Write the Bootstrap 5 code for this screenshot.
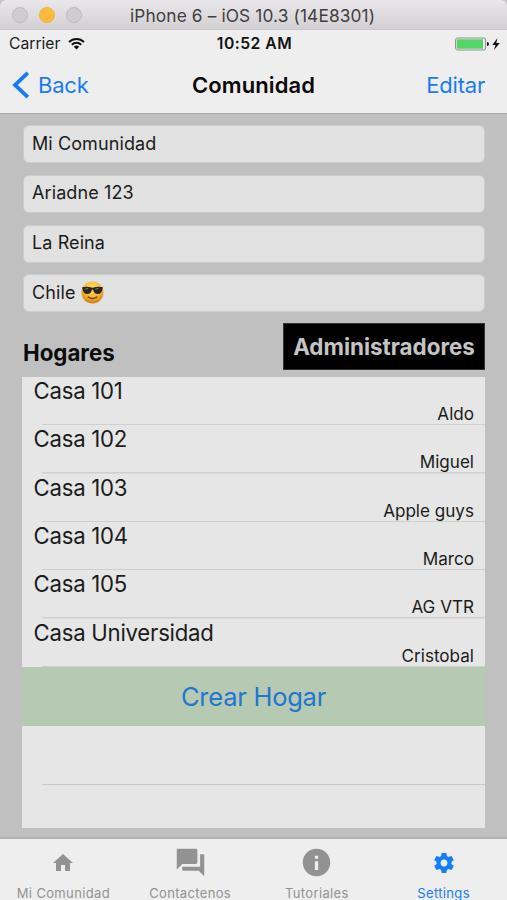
<!DOCTYPE html>
<html lang="es">
<head>
<meta charset="utf-8">
<meta name="viewport" content="width=device-width, initial-scale=1">
<title>Comunidad</title>
<link href="https://cdn.jsdelivr.net/npm/bootstrap@5.3.0/dist/css/bootstrap.min.css" rel="stylesheet">
<style>
  body { font-family: Inter, "Liberation Sans", sans-serif; background: #c0c0c0; color: #1b1b1b; height: 900px; overflow: hidden; line-height: 1; white-space: nowrap; }
  .window-bar { height: 30px; padding-left: 12px; background: linear-gradient(#e9e7e9, #d3d0d3); border-bottom: 1px solid #c9c7c9; border-radius: 6px 6px 0 0; }
  .light { width: 16px; height: 16px; border-radius: 50%; background: #cfcdcf; border: 1px solid #bdbbbd; }
  .light-min { background: #fdbc40; border-color: #eeb03c; }
  .window-title { color: #3f3f3f; font-size: 17.3px; padding-left: 48px; letter-spacing: .13px; padding-top: 3px; }
  .status-bar { height: 27px; background: #eee; font-size: 15.7px; padding: 0 7px 0 9px; }
  .status-bar > div { flex: 1 1 0; }
  .clock { font-weight: 600; color: #111; letter-spacing: .5px; }
  .title-bar { height: 57px; background: #eee; border-bottom: 1px solid #aaa; padding: 0 22px 0 12px; font-size: 22px; color: #1a7cf5; letter-spacing: -.2px; }
  .title-bar > div { flex: 1 1 0; }
  .page-title { font-weight: 600; color: #0a0a0a; letter-spacing: .1px; padding-left: 10px; }
  .main-area { height: 723px; padding: 11px 22px 0 22px; }
  .fields { gap: 11.8px; padding: 0 0 0 1px; }
  .field { height: 38px; background: #e1e1e1; border: 1px solid #cdcdcd; border-radius: 6px; padding: 0 8px 1px; font-size: 18px; letter-spacing: .1px; }
  .heading-row { height: 47px; margin-top: 11px; margin-bottom: 6.5px; }
  .section-name { font-size: 22.3px; font-weight: 700; color: #0c0c0c; padding: 12px 0 0 1px; }
  .admin-btn { width: 202px; background: #000; color: #c4c4c4; border: 1px solid #333; border-radius: 0; font-size: 22.4px; font-weight: 700; line-height: 1; padding: 0; }
  .home-table { height: 451.5px; background: #e6e6e6; }
  .home-row { height: 48.4px; padding: 2px 11px 0 11.5px; background: linear-gradient(#cfcfcf, #cfcfcf) 20px 100% / 100% 1.5px no-repeat; }
  .home-name { font-size: 22.2px; line-height: 24px; letter-spacing: -.25px; }
  .home-owner { font-size: 17.1px; line-height: 20px; margin-top: 1px; }
  .create-btn { height: 59px; background: #b6c9b2; color: #2275d0; font-size: 25.5px; letter-spacing: -.25px; border: 0; border-radius: 0; padding: 0; }
  .blank-row { height: 59px; background: linear-gradient(#c9c9c9, #c9c9c9) 20px 100% / 100% 1px no-repeat; }
  .tabs { height: 63px; background: #eee; border-top: 2px solid #b2b2b2; color: #929292; font-size: 13px; letter-spacing: .35px; }
  .tab-item { flex: 1 1 0; padding-top: 7px; }
  .tab-icon { height: 33px; margin-bottom: 8px; }
  .tab-current { color: #177efb; }
</style>
</head>
<body class="d-flex flex-column">
  <header>
    <div class="window-bar d-flex align-items-center">
      <div class="d-flex" style="gap:11px"><span class="light"></span><span class="light light-min"></span><span class="light"></span></div>
      <div class="window-title">iPhone 6 – iOS 10.3 (14E8301)</div>
    </div>
    <div class="status-bar d-flex align-items-center">
      <div class="d-flex align-items-center gap-2"><span>Carrier</span>
        <svg width="17" height="13" viewBox="0 0 17 13"><g fill="none" stroke="#111" stroke-width="2"><path d="M1 5a10.6 10.6 0 0 1 15 0"/><path d="M3.8 7.8a6.6 6.6 0 0 1 9.4 0"/></g><path d="M8.5 12.5 5.8 9.8a3.8 3.8 0 0 1 5.4 0z" fill="#111"/></svg>
      </div>
      <div class="clock text-center">10:52 AM</div>
      <div class="d-flex align-items-center justify-content-end">
        <svg width="45" height="14" viewBox="0 0 45 14"><rect x=".6" y="1" width="30" height="12" rx="2" fill="#eee" stroke="#8b8b8b"/><rect x="1.8" y="2.2" width="26.2" height="9.6" rx="1" fill="#53d769"/><path d="M32 5q2 0 2 2t-2 2z" fill="#111"/><path d="M42.500 1 37.300 8h3.200l-1.500 5L44.800 6h-3.500z" fill="#111"/></svg>
      </div>
    </div>
    <nav class="title-bar d-flex align-items-center">
      <div class="d-flex align-items-center"><svg width="18" height="28" viewBox="0 0 18 28" fill="none" stroke="currentColor" stroke-width="3.8"><path d="M15.8 1.8 3 14l12.800 12.200"/></svg><span class="ps-2">Back</span></div>
      <div class="page-title text-center">Comunidad</div>
      <div class="text-end">Editar</div>
    </nav>
  </header>
  <main class="main-area">
    <div class="fields d-flex flex-column">
      <div class="field d-flex align-items-center">Mi Comunidad</div>
      <div class="field d-flex align-items-center">Ariadne 123</div>
      <div class="field d-flex align-items-center">La Reina</div>
      <div class="field d-flex align-items-center">Chile
        <svg style="margin-left:5px" width="23" height="23" viewBox="0 0 23 23"><defs><radialGradient id="face" cx=".5" cy=".3" r=".7"><stop offset="0" stop-color="#ffe26a"/><stop offset=".6" stop-color="#f5b62d"/><stop offset="1" stop-color="#cf7b18"/></radialGradient></defs><circle cx="11.5" cy="11.5" r="11" fill="url(#face)"/><path d="M1 6.3q5-1.3 10.5.5 5.500-1.800 10.500-.5l-.5 1.800q-.8 5-4.700 5-3.700 0-4.700-4.300h-1.200q-1 4.300-4.700 4.300-3.900 0-4.700-5z" fill="#292725"/><path d="M4 8.2 7 7.500M14.500 8.200l3-.7" stroke="#777" stroke-width="1"/><path d="M7.300 16q4.200 3 8.400 0" fill="none" stroke="#7b3e12" stroke-width="1.500" stroke-linecap="round"/></svg>
      </div>
    </div>
    <div class="heading-row d-flex justify-content-between align-items-stretch">
      <div class="section-name d-flex align-items-center">Hogares</div>
      <button class="btn admin-btn">Administradores</button>
    </div>
    <div class="home-table">
      <div class="home-row"><div class="home-name">Casa 101</div><div class="home-owner text-end">Aldo</div></div>
      <div class="home-row"><div class="home-name">Casa 102</div><div class="home-owner text-end">Miguel</div></div>
      <div class="home-row"><div class="home-name">Casa 103</div><div class="home-owner text-end">Apple guys</div></div>
      <div class="home-row"><div class="home-name">Casa 104</div><div class="home-owner text-end">Marco</div></div>
      <div class="home-row"><div class="home-name">Casa 105</div><div class="home-owner text-end">AG VTR</div></div>
      <div class="home-row"><div class="home-name">Casa Universidad</div><div class="home-owner text-end">Cristobal</div></div>
      <button class="btn create-btn d-block w-100">Crear Hogar</button>
      <div class="blank-row"></div>
    </div>
  </main>
  <footer class="tabs d-flex text-center">
    <div class="tab-item"><div class="tab-icon d-flex align-items-center justify-content-center"><svg width="24" height="24" viewBox="0 0 24 24" fill="currentColor"><path d="M10 20v-6h4v6h5v-8h3L12 3 2 12h3v8z"/></svg></div>Mi Comunidad</div>
    <div class="tab-item"><div class="tab-icon"><svg width="33" height="33" viewBox="0 0 24 24" fill="currentColor"><path d="M21 6h-2v9H6v2c0 .55.45 1 1 1h11l4 4V7c0-.55-.45-1-1-1zm-4 6V3c0-.55-.45-1-1-1H3c-.55 0-1 .45-1 1v14l4-4h10c.55 0 1-.45 1-1z"/></svg></div>Contactenos</div>
    <div class="tab-item"><div class="tab-icon"><svg width="33" height="33" viewBox="0 0 24 24" fill="currentColor"><path d="M12 2C6.480 2 2 6.480 2 12s4.480 10 10 10 10-4.480 10-10S17.520 2 12 2zm1.200 15.500h-2.400v-6.500h2.400v6.500zm0-8.200h-2.400V7h2.400v2.300z"/></svg></div>Tutoriales</div>
    <div class="tab-item tab-current"><div class="tab-icon d-flex align-items-center justify-content-center"><svg width="24" height="24" viewBox="0 0 24 24" fill="currentColor"><path d="M19.430 12.980c.04-.32.07-.64.07-.98s-.03-.66-.07-.98l2.110-1.650c.19-.15.24-.42.12-.64l-2-3.460c-.12-.22-.39-.3-.61-.22l-2.490 1c-.52-.4-1.080-.73-1.690-.98l-.38-2.650C14.460 2.180 14.250 2 14 2h-4c-.25 0-.46.18-.49.42l-.38 2.650c-.61.25-1.170.59-1.690.98l-2.490-1c-.23-.09-.49 0-.61.22l-2 3.460c-.13.22-.07.49.12.64l2.110 1.650c-.04.32-.07.65-.07.98s.03.66.07.98l-2.110 1.650c-.19.15-.24.42-.12.64l2 3.460c.12.22.39.3.61.22l2.490-1c.52.4 1.080.73 1.690.98l.38 2.650c.03.24.24.42.49.42h4c.25 0 .46-.18.49-.42l.38-2.650c.61-.25 1.170-.59 1.690-.98l2.490 1c.23.09.49 0 .61-.22l2-3.460c.12-.22.07-.49-.12-.64l-2.110-1.650zM12 15.500c-1.930 0-3.500-1.570-3.500-3.500s1.570-3.500 3.500-3.500 3.500 1.570 3.500 3.500-1.570 3.500-3.500 3.500z"/></svg></div>Settings</div>
  </footer>
<script src="https://cdn.jsdelivr.net/npm/bootstrap@5.3.0/dist/js/bootstrap.bundle.min.js"></script>
</body>
</html>
